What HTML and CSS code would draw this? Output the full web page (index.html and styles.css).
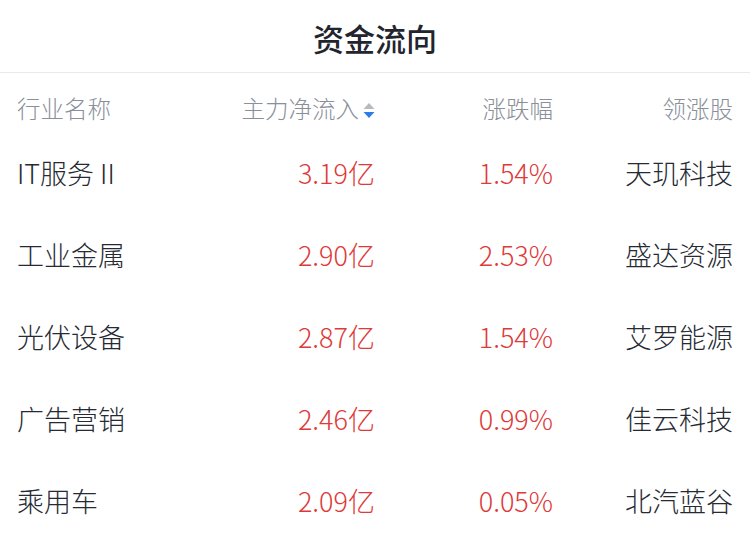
FILE: index.html
```html
<!DOCTYPE html>
<html lang="zh">
<head>
<meta charset="utf-8">
<link rel="stylesheet" href="styles.css">
</head>
<body>
<div class="page">
  <div class="title">资金流向</div>
  <div class="row head">
    <div class="c1">行业名称</div>
    <div class="c2">主力净流入<svg class="sort" width="12" height="17" viewBox="0 0 12 17"><path d="M6 1 L11.5 7 L0.5 7 Z" fill="#b5bac3"/><path d="M0.5 10 L11.5 10 L6 16 Z" fill="#2f7be8"/></svg></div>
    <div class="c3">涨跌幅</div>
    <div class="c4">领涨股</div>
  </div>
  <div class="row">
    <div class="c1">IT服务 II</div>
    <div class="c2 red">3.19亿</div>
    <div class="c3 red">1.54%</div>
    <div class="c4">天玑科技</div>
  </div>
  <div class="row">
    <div class="c1">工业金属</div>
    <div class="c2 red">2.90亿</div>
    <div class="c3 red">2.53%</div>
    <div class="c4">盛达资源</div>
  </div>
  <div class="row">
    <div class="c1">光伏设备</div>
    <div class="c2 red">2.87亿</div>
    <div class="c3 red">1.54%</div>
    <div class="c4">艾罗能源</div>
  </div>
  <div class="row">
    <div class="c1">广告营销</div>
    <div class="c2 red">2.46亿</div>
    <div class="c3 red">0.99%</div>
    <div class="c4">佳云科技</div>
  </div>
  <div class="row">
    <div class="c1">乘用车</div>
    <div class="c2 red">2.09亿</div>
    <div class="c3 red">0.05%</div>
    <div class="c4">北汽蓝谷</div>
  </div>
</div>
</body>
</html>
```
FILE: styles.css
```css
* { box-sizing: border-box; }
html, body { margin: 0; padding: 0; background: #fff; }
body {
  font-family: "Noto Sans CJK SC", "Noto Sans", sans-serif;
  font-weight: 300;
  color: #262a33;
}
.page { width: 750px; }
.title {
  height: 73px;
  line-height: 76px;
  text-align: center;
  font-size: 31px;
  font-weight: 500;
  color: #22252d;
  border-bottom: 1px solid #e9e9ec;
}
.row {
  display: grid;
  grid-template-columns: 160px 198px 178px 180px;
  padding: 0 17px;
  height: 82px;
  align-items: center;
  font-size: 27px;
}
.head {
  height: 58px;
  padding-top: 12px;
  align-items: center;
  font-size: 23.5px;
  color: #8a8f9a;
}
.c1 { text-align: left; white-space: nowrap; }
.c2, .c3, .c4 { text-align: right; white-space: nowrap; }
.red { color: #de3a3a; }
.sort { margin-left: 4px; vertical-align: -1px; }
```
